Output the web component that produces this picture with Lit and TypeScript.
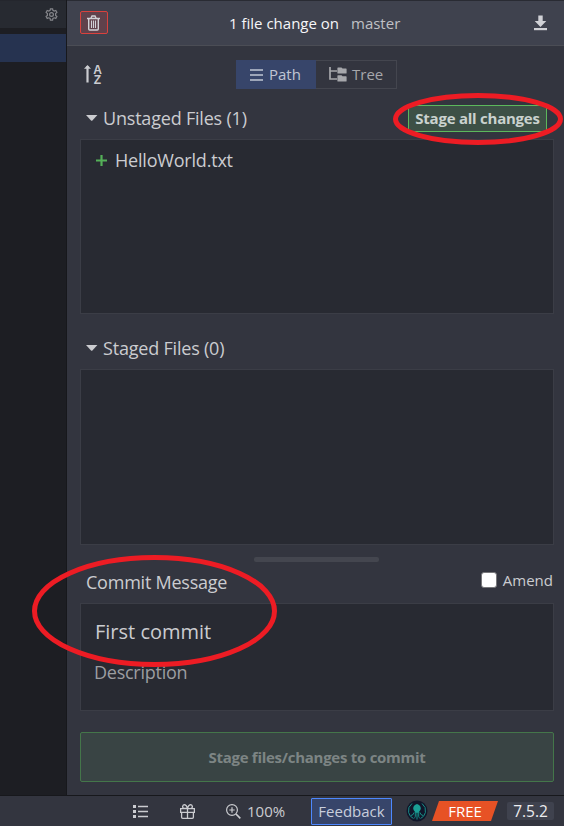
import { LitElement, html, css, svg } from "lit";
import { customElement, property } from "lit/decorators.js";

const glyphs: Record<string, { w: number; h: number; body: unknown }> = {
  gear: {
    w: 13, h: 13,
    body: svg`<path d="M5.4 .8h2.200l.3 1.600 1.300.7 1.600-.6 1.100 1.900-1.300 1.100v1.900l1.300 1.100-1.100 1.900-1.600-.6-1.300.7-.3 1.600H5.400l-.3-1.600-1.300-.7-1.600.6-1.100-1.900 1.300-1.100V5.500L1.100 4.400l1.100-1.900 1.600.6 1.300-.7z" fill="none" stroke="currentColor" stroke-width="1.200"/><circle cx="6.500" cy="6.500" r="1.900" fill="none" stroke="currentColor" stroke-width="1.200"/>`,
  },
  trash: {
    w: 13, h: 16,
    body: svg`<path d="M0 3.500h13M4 3l1-2h3l1 2M1.700 3.500v10.500q0 1 1 1h7.600q1 0 1-1V3.500" fill="none" stroke="currentColor" stroke-width="1.400"/><path d="M4.500 5.500v7.500M6.500 5.500v7.500M8.500 5.500v7.500" stroke="currentColor" stroke-width="1.100"/>`,
  },
  download: {
    w: 13, h: 16,
    body: svg`<path d="M4.300 .5h4.400v5.500h3.600L6.500 12 .7 6h3.600z" fill="currentColor"/><path d="M0 13h13v2.200H0z" fill="currentColor"/>`,
  },
  sort: {
    w: 8, h: 19,
    body: svg`<path d="M3.500 18.500V2" stroke="currentColor" stroke-width="2.200"/><path d="M0 4.800 3.500 1 7 4.800z" fill="currentColor"/>`,
  },
  lines: {
    w: 13, h: 12,
    body: svg`<path d="M0 1h13M0 6h13M0 11h13" stroke="currentColor" stroke-width="1.700"/>`,
  },
  tree: {
    w: 18, h: 15,
    body: svg`<path d="M1 0v12h7M1 4h7" fill="none" stroke="currentColor" stroke-width="1.700"/><path d="M9 .5h3.500l1 1H17q.6 0 .6.600V6q0 .6-.6.600H9q-.6 0-.6-.6V1q0-.5.6-.500zM9 8.300h3.500l1 1H17q.6 0 .6.600v4.100q0 .6-.6.600H9q-.6 0-.6-.6V8.800q0-.5.6-.500z" fill="currentColor"/>`,
  },
  caret: { w: 12, h: 6, body: svg`<path d="M0 0h11.400L6.400 5.500q-.7.700-1.400 0z" fill="currentColor"/>` },
  plus: { w: 11, h: 11, body: svg`<path d="M5.500 0v11M0 5.500h11" stroke="currentColor" stroke-width="2.200"/>` },
  list: {
    w: 15, h: 13,
    body: svg`<path d="M0 0h3v3H0zM0 5h3v3H0zM0 10h3v3H0z" fill="currentColor"/><path d="M5 1.500h10M5 6.500h10M5 11.500h10" stroke="currentColor" stroke-width="1.300"/>`,
  },
  gift: {
    w: 15, h: 15,
    body: svg`<path d="M.6 4.600h13.800v3.700H.6zM1.600 8.300h11.800v4.900q0 1.100-1.100 1.100H2.700q-1.100 0-1.100-1.100zM7.500 4.600v9.700M7.400 4.500H4.200Q2.500 4.300 2.600 2.500 3 .7 4.700.7 6.500 1 7.500 4.400 8.500 1 10.300.7 12 .7 12.400 2.500q.1 1.800-1.600 2" fill="none" stroke="currentColor" stroke-width="1.300"/>`,
  },
  zoom: {
    w: 15, h: 15,
    body: svg`<circle cx="6" cy="6" r="5.400" fill="none" stroke="currentColor" stroke-width="1.200"/><path d="M6 3.300v5.400M3.300 6h5.400" stroke="currentColor" stroke-width="1.200"/><path d="m10 10 4.300 4.300" stroke="currentColor" stroke-width="1.700"/>`,
  },
  kraken: {
    w: 22, h: 22,
    body: svg`<circle cx="11" cy="11" r="10.500" fill="#11162a"/><g fill="none" stroke="#178f88" stroke-width="1"><path d="M6 3.500Q1.500 7 2.600 12.500 3.800 17 7.500 18.500M16 3.500q4.500 3.500 3.400 9-1.200 4.500-4.900 6M8 12.500q-.3 2.500-3 3M14 12.500q.3 2.500 3 3M9.300 12.500v4q0 1-1 1.500M12.700 12.500v4q0 1 1 1.500M11 12v7.500"/></g><path d="M11 4q3.800 1 3.800 4.700-.3 1.700-1.600 2.800v1.300H8.800v-1.300Q7.500 10.400 7.200 8.700 7.200 5 11 4z" fill="#1a9f96"/>`,
  },
};

@customElement("kr-icon")
export class KrIcon extends LitElement {
  static styles = css`
    :host { display: block; flex: none; }
    svg { display: block; }
  `;
  @property() name = "";
  render() {
    const g = glyphs[this.name];
    return html`<svg width=${g.w} height=${g.h} viewBox="0 0 ${g.w} ${g.h}">${g.body}</svg>`;
  }
}

@customElement("app-root")
export class AppRoot extends LitElement {
  static styles = css`
    :host {
      display: grid;
      position: relative;
      grid-template: 795px 31px / 66px 498px;
      width: 564px;
      height: 826px;
      overflow: hidden;
      background: #33353f;
      color: #cbccd0;
      font: 18px/24px "Open Sans", sans-serif;
      white-space: nowrap;
    }
    * { box-sizing: border-box; }
    .side { background: #1d1e23; }
    .side-head {
      display: flex; justify-content: flex-end; padding: 7px 8px 0 0;
      height: 28px; background: #272a31; border-top: 1px solid #24262d;
      color: #85868b; margin-bottom: 6px;
    }
    .side-row { height: 28px; background: #263350; }
    .panel { border-left: 1px solid #17181c; display: flex; flex-direction: column; }
    .head {
      display: flex; align-items: center; height: 46px; padding: 0 17px 0 13px;
      background: #3f424e; border-top: 1px solid #292b33; border-bottom: 1px solid #4b4d55;
      font-size: 15px;
    }
    .discard {
      display: flex; align-items: center; width: 28px; height: 23px; margin-top: -1px; padding-left: 6px;
      border: 1px solid #d9413d; border-radius: 2px; background: #60414b;
    }
    .head .title { width: 110px; margin-left: 121px; color: #f6f6f8; font-weight: 500; }
    .head .branch { margin-left: 12px; color: #bfc0c5; }
    .head kr-icon { color: #d0d1d6; }
    .head .pull { margin: -1px 0 0 auto; }
    .body { display: flex; flex-direction: column; padding: 14px 10px 0 13px; }
    .tools { display: flex; height: 29px; }
    .sort { display: flex; width: 156px; padding: 4px 0 0 4px; gap: 1px; }
    .az {
      display: flex; flex-direction: column; align-items: center; width: 9px; padding-top: 1px;
      font: bold 12px/10px "Liberation Sans", sans-serif;
    }
    .tabs { display: flex; font-size: 15px; }
    .tab { display: flex; align-items: center; height: 29px; }
    .tab span { margin-top: -2px; }
    .path { width: 80px; padding-left: 14px; gap: 6px; background: #37456a; color: #c0c6d4; }
    .tree { width: 81px; padding-left: 13px; gap: 5px; border: 1px solid #44464f; border-left: 0; color: #a6a7ab; }
    .section { display: flex; align-items: center; padding-left: 6px; letter-spacing: -.2px; }
    .section kr-icon { margin-right: 5px; }
    .unstaged { height: 50px; padding-top: 8px; }
    .staged { height: 55px; padding-top: 13px; }
    .stage-all {
      width: 139px; height: 27px; margin-left: auto; margin-right: 7px; letter-spacing: -.24px;
      border: 1px solid #5cb85c; background: #3d5046; color: #cad2ce;
      font: bold 15px/24px "Open Sans", sans-serif; text-align: center;
    }
    .box { border: 1px solid #3b3d46; background: #282a32; }
    .files { height: 175px; padding: 8px 0 0 15px; }
    .files.lower { height: 176px; }
    .file { display: flex; align-items: center; gap: 8px; letter-spacing: -.2px; }
    .file kr-icon { color: #54b058; }
    .grip { width: 125px; height: 5px; margin: 12px 0 0 174px; border-radius: 2px; background: #44464f; }
    .commit { display: flex; height: 41px; padding: 8px 0 0 6px; letter-spacing: -.23px; }
    .amend { display: flex; margin: -2px 1px 0 auto; font-size: 15px; gap: 6px; letter-spacing: 0; }
    .check { width: 16px; height: 16px; margin-top: 4px; border: 1px solid #77777a; border-radius: 3px; background: #fff; }
    .message { height: 108px; padding: 16px 0 0 13px; }
    .summary { font-size: 20px; margin-left: 1px; }
    .description { margin-top: 16px; color: #9c9da1; letter-spacing: -.25px; }
    .submit {
      height: 50px; margin-top: 21px; border: 1px solid #44764a; border-radius: 2px; letter-spacing: -.27px;
      background: #394444; color: #7d8584; text-align: center; font: bold 15px/48px "Open Sans", sans-serif;
    }
    .footer {
      grid-column: 1 / -1; display: flex; align-items: center; height: 31px; padding-left: 133px;
      border-top: 1px solid #17181c; background: #33353f;
    }
    .footer .gift { margin-left: 32px; }
    .footer .zoom { margin-left: 31px; }
    .pct { width: 57px; margin: -1px 0 0 6px; font-size: 15px; }
    .feedback {
      width: 81px; height: 27px; margin-left: 7px; border: 1px solid #4d88ff; border-radius: 1px; background: #37456a;
      color: #c8cedc; font-size: 15px; line-height: 25px; text-align: center;
    }
    .logo { margin-left: 14px; }
    .plan {
      width: 66px; height: 20px; margin-left: 4px; background: #e75225; color: #fff;
      clip-path: polygon(7px 0, 100% 0, 59px 100%, 0 100%); font-size: 15px; line-height: 20px; text-align: center;
    }
    .version {
      width: 47px; height: 18px; margin-left: 9px; border-radius: 2px; background: #3f424e; color: #ececef;
      font-size: 15.5px; line-height: 19px; text-align: center;
    }
    .marks { position: absolute; inset: 0; pointer-events: none; }
  `;

  render() {
    return html`
      <div class="side">
        <div class="side-head"><kr-icon name="gear"></kr-icon></div>
        <div class="side-row"></div>
      </div>
      <div class="panel">
        <div class="head">
          <div class="discard"><kr-icon name="trash"></kr-icon></div>
          <span class="title">1 file change on</span>
          <span class="branch">master</span>
          <kr-icon class="pull" name="download"></kr-icon>
        </div>
        <div class="body">
          <div class="tools">
            <div class="sort">
              <kr-icon name="sort"></kr-icon>
              <div class="az"><span>A</span><span>Z</span></div>
            </div>
            <div class="tabs">
              <div class="tab path"><kr-icon name="lines"></kr-icon><span>Path</span></div>
              <div class="tab tree"><kr-icon name="tree"></kr-icon><span>Tree</span></div>
            </div>
          </div>
          <div class="section unstaged">
            <kr-icon name="caret"></kr-icon><span>Unstaged Files (1)</span>
            <div class="stage-all"><span>Stage all changes</span></div>
          </div>
          <div class="box files">
            <div class="file"><kr-icon name="plus"></kr-icon><span>HelloWorld.txt</span></div>
          </div>
          <div class="section staged">
            <kr-icon name="caret"></kr-icon><span>Staged Files (0)</span>
          </div>
          <div class="box files lower"></div>
          <div class="grip"></div>
          <div class="commit">
            <span>Commit Message</span>
            <div class="amend"><div class="check"></div><span>Amend</span></div>
          </div>
          <div class="box message">
            <div class="summary">First commit</div>
            <div class="description">Description</div>
          </div>
          <div class="submit">Stage files/changes to commit</div>
        </div>
      </div>
      <div class="footer">
        <kr-icon name="list"></kr-icon>
        <kr-icon class="gift" name="gift"></kr-icon>
        <kr-icon class="zoom" name="zoom"></kr-icon>
        <span class="pct">100%</span>
        <div class="feedback">Feedback</div>
        <kr-icon class="logo" name="kraken"></kr-icon>
        <div class="plan">FREE</div>
        <div class="version">7.5.2</div>
      </div>
      <svg class="marks" width="564" height="826" fill="none" stroke="#ed1c24" stroke-width="5">
        <ellipse cx="478" cy="119" rx="82.500" ry="23.500"></ellipse>
        <ellipse cx="154.500" cy="611" rx="120" ry="53.500"></ellipse>
      </svg>
    `;
  }
}
